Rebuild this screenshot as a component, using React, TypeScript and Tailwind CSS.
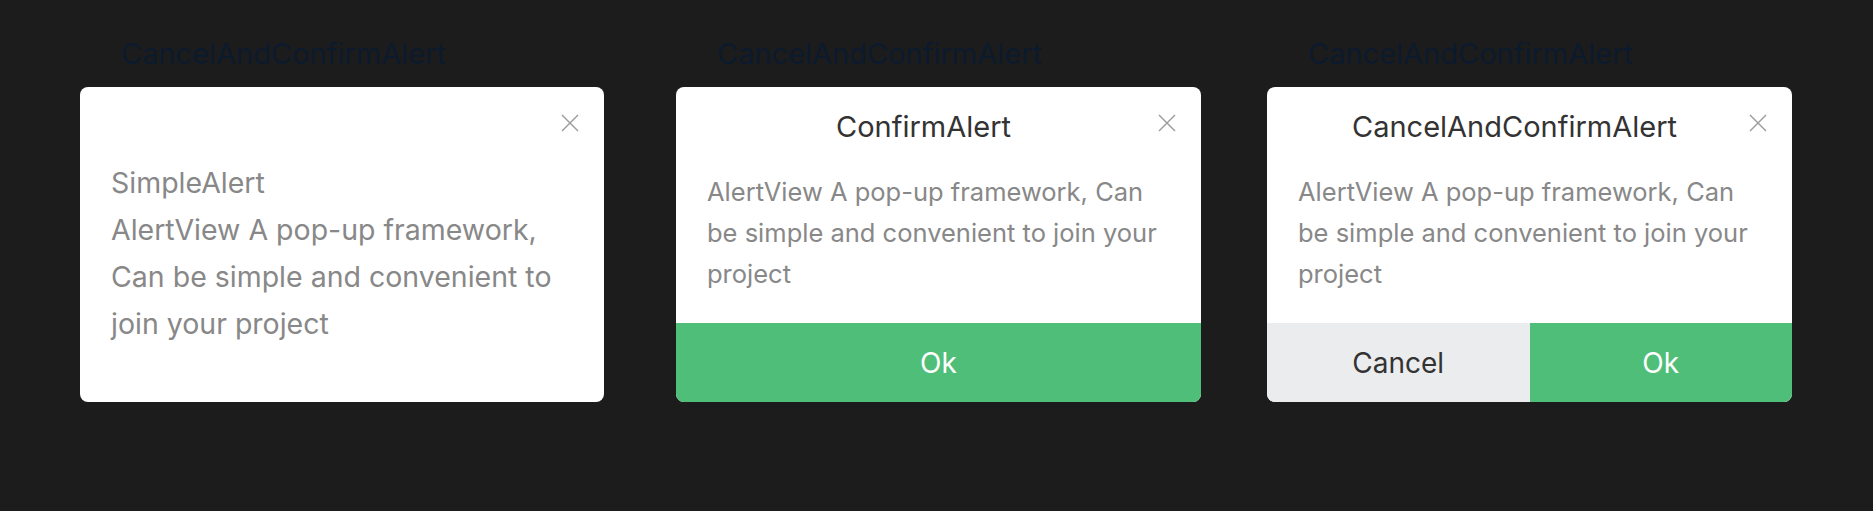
const CloseIcon = () => (
  <svg width="18" height="18" viewBox="0 0 18 18" className="absolute top-[27px] right-[25px]">
    <path d="M1 1 L17 17 M17 1 L1 17" stroke="#9a9a9a" strokeWidth="1.4" fill="none" />
  </svg>
);

const Label = () => (
  <div className="pl-[41px] pt-[36px] h-[87px] text-[29px] leading-[36px] text-[#0c1a2d] whitespace-nowrap">
    CancelAndConfirmAlert
  </div>
);

const SimpleAlert = () => (
  <div className="relative w-[524px] h-[315px] rounded-[8px] bg-white px-[31px] pt-[72px]">
    <CloseIcon />
    <p className="text-[28.5px] leading-[47px] text-[#888888] whitespace-nowrap">
      SimpleAlert
      <br />
      AlertView A pop-up framework,
      <br />
      Can be simple and convenient to
      <br />
      join your project
    </p>
  </div>
);

const TitledAlert = ({ title, cancel }: { title: string; cancel?: boolean }) => (
  <div className="relative flex flex-col w-[525px] h-[315px] rounded-[8px] bg-white overflow-hidden">
    <CloseIcon />
    <h2 className="pt-[22px] pr-[30px] text-center text-[29px] leading-[36px] text-[#333333]">{title}</h2>
    <p className="px-[31px] pt-[26px] text-[25.5px] leading-[41px] text-[#888888] whitespace-nowrap">
      AlertView A pop-up framework, Can
      <br />
      be simple and convenient to join your
      <br />
      project
    </p>
    <div className="mt-auto flex h-[79px] text-[28px]">
      {cancel && (
        <button className="flex-1 flex items-center justify-center bg-[#ebecee] text-[#333333]">
          Cancel
        </button>
      )}
      <button className="flex-1 flex items-center justify-center bg-[#4fbe79] text-white">Ok</button>
    </div>
  </div>
);

export default function App() {
  return (
    <div
      className="h-[511px] w-full bg-[#1c1c1c] flex"
      style={{ fontFamily: "Inter, 'Noto Sans', sans-serif" }}
    >
      <div className="ml-[80px] shrink-0">
        <Label />
        <SimpleAlert />
      </div>
      <div className="ml-[72px] shrink-0">
        <Label />
        <TitledAlert title="ConfirmAlert" />
      </div>
      <div className="ml-[66px] shrink-0">
        <Label />
        <TitledAlert title="CancelAndConfirmAlert" cancel />
      </div>
    </div>
  );
}
